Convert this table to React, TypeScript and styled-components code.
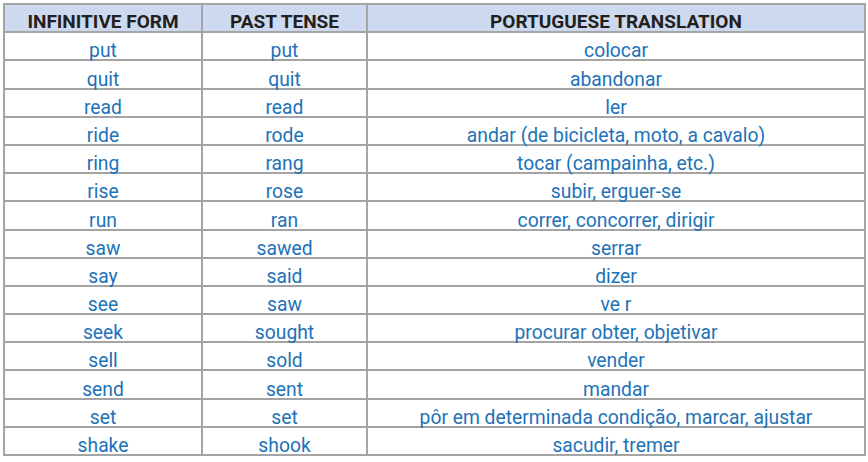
import React from "react";
import styled, { createGlobalStyle } from "styled-components";

const Global = createGlobalStyle`
  html, body { margin: 0; padding: 0; background: #ffffff; }
  body { font-family: Roboto, "Liberation Sans", sans-serif; }
`;

const Page = styled.div`
  width: 868px;
  height: 462px;
  padding: 3px 0 0 3px;
  box-sizing: border-box;
`;

const Table = styled.table`
  width: 863px;
  border-collapse: collapse;
  table-layout: fixed;
  border: 2px solid #a4a4a4;
`;

const HeadCell = styled.th`
  background: #cdd9ee;
  color: #231f20;
  font-weight: 700;
  font-size: 19px;
  text-align: center;
  padding: 0;
  border: 2px solid #a4a4a4;
  height: 26.2px;
  line-height: 18px;
  vertical-align: bottom;
`;

const Cell = styled.td`
  color: #1d72b8;
  font-size: 19.3px;
  text-align: center;
  padding: 0;
  border: 2px solid #a4a4a4;
  height: 26.2px;
  line-height: 17px;
  vertical-align: bottom;
`;

const rows: [string, string, string][] = [
  ["put", "put", "colocar"],
  ["quit", "quit", "abandonar"],
  ["read", "read", "ler"],
  ["ride", "rode", "andar (de bicicleta, moto, a cavalo)"],
  ["ring", "rang", "tocar (campainha, etc.)"],
  ["rise", "rose", "subir, erguer-se"],
  ["run", "ran", "correr, concorrer, dirigir"],
  ["saw", "sawed", "serrar"],
  ["say", "said", "dizer"],
  ["see", "saw", "ve r"],
  ["seek", "sought", "procurar obter, objetivar"],
  ["sell", "sold", "vender"],
  ["send", "sent", "mandar"],
  ["set", "set", "pôr em determinada condição, marcar, ajustar"],
  ["shake", "shook", "sacudir, tremer"],
];

export default function App() {
  return (
    <>
      <Global />
      <Page>
        <Table>
          <colgroup>
            <col style={{ width: 198 }} />
            <col style={{ width: 165 }} />
            <col />
          </colgroup>
          <thead>
            <tr>
              <HeadCell>INFINITIVE FORM</HeadCell>
              <HeadCell>PAST TENSE</HeadCell>
              <HeadCell>PORTUGUESE TRANSLATION</HeadCell>
            </tr>
          </thead>
          <tbody>
            {rows.map((r) => (
              <tr key={r[0]}>
                <Cell>{r[0]}</Cell>
                <Cell>{r[1]}</Cell>
                <Cell>{r[2]}</Cell>
              </tr>
            ))}
          </tbody>
        </Table>
      </Page>
    </>
  );
}
